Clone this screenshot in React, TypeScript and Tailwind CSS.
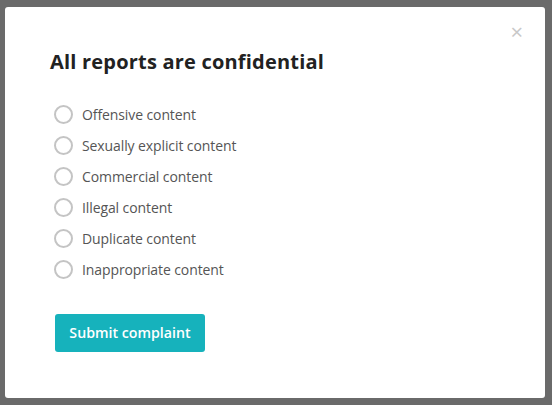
import React from "react";

const options = [
  "Offensive content",
  "Sexually explicit content",
  "Commercial content",
  "Illegal content",
  "Duplicate content",
  "Inappropriate content",
];

export default function App() {
  return (
    <div
      className="w-[552px] h-[405px] bg-[#6a6a6a] px-[5px] pt-[7px] overflow-hidden"
      style={{ fontFamily: "'Open Sans', 'Noto Sans', sans-serif" }}
    >
      <div className="relative w-[540px] h-[391px] bg-white rounded-[3px] pl-[45px] pt-[40px]">
        <button className="absolute right-[22px] top-[13px] text-[22px] leading-none text-[#c8c8c8]">
          ×
        </button>
        <h2 className="text-[20px] leading-[30px] font-bold text-[#222] tracking-[0.2px]">
          All reports are confidential
        </h2>
        <div className="mt-[28px] flex flex-col gap-[12px] pl-[4px]">
          {options.map((o) => (
            <label key={o} className="flex items-center gap-[9px] h-[19px]">
              <span className="w-[19px] h-[19px] rounded-full border-2 border-[#c4c4c4] bg-white" />
              <span className="text-[14px] text-[#555] leading-[19px] tracking-[-0.1px]">{o}</span>
            </label>
          ))}
        </div>
        <button className="mt-[35px] ml-[5px] w-[150px] h-[38px] rounded-[3px] bg-[#16b2bc] text-white text-[14.2px] font-semibold">
          Submit complaint
        </button>
      </div>
    </div>
  );
}
